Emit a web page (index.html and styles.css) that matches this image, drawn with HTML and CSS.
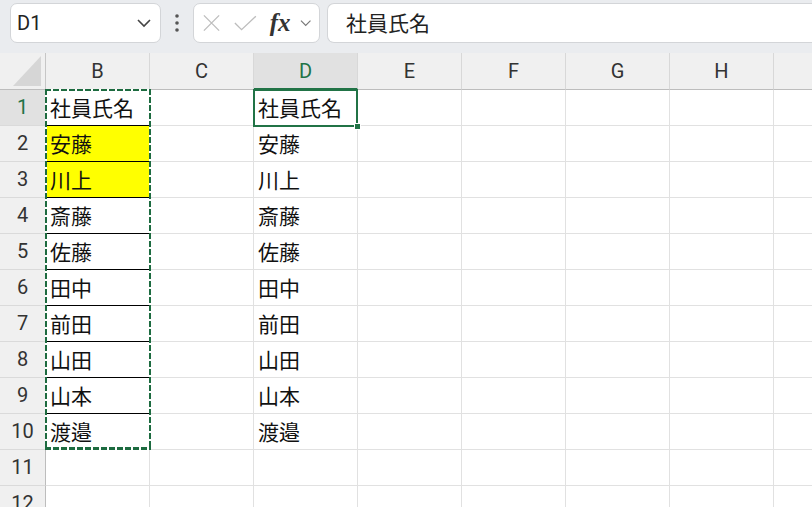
FILE: index.html
```html
<!DOCTYPE html>
<html lang="ja">
<head>
  <meta charset="UTF-8">
  <meta name="viewport" content="width=device-width, initial-scale=1.0">
  <title>Sheet</title>
  <link rel="stylesheet" href="styles.css">
</head>
<body>

<div class="toolbar">
  <div class="namebox">
    <span class="ref">D1</span>
    <svg class="chev" width="16" height="10" viewBox="0 0 16 10"><path d="M2 2 L8 8 L14 2" fill="none" stroke="#444" stroke-width="1.6"/></svg>
  </div>
  <div class="dots">
    <svg width="6" height="20" viewBox="0 0 6 20"><circle cx="3" cy="3" r="1.8" fill="#555"/><circle cx="3" cy="10" r="1.8" fill="#555"/><circle cx="3" cy="17" r="1.8" fill="#555"/></svg>
  </div>
  <div class="fxbox">
    <svg width="20" height="20" viewBox="0 0 20 20"><path d="M2 2 L18 18 M18 2 L2 18" stroke="#bdbdbd" stroke-width="1.4"/></svg>
    <svg width="26" height="20" viewBox="0 0 26 20"><path d="M2 10 L9 17 L24 3" fill="none" stroke="#bdbdbd" stroke-width="1.4"/></svg>
    <span class="fx">fx</span>
    <svg width="12" height="8" viewBox="0 0 12 8"><path d="M1 1.5 L6 6.5 L11 1.5" fill="none" stroke="#777" stroke-width="1.2"/></svg>
  </div>
  <div class="formula">社員氏名</div>
</div>

<div class="sheet" id="sheet">
  <div class="grid" id="grid">
    <div class="corner"><svg width="28" height="30" viewBox="0 0 28 30"><polygon points="28,0 28,30 0,30" fill="#d6d6d6"/></svg></div>
  </div>
  <div class="copy-range"></div>
  <div class="active-cell"><span class="handle"></span></div>
</div>

<script>
  const grid = document.getElementById('grid');
  const cols = ['B', 'C', 'D', 'E', 'F', 'G', 'H', ''];
  const names = ['社員氏名', '安藤', '川上', '斎藤', '佐藤', '田中', '前田', '山田', '山本', '渡邉'];

  cols.forEach(c => {
    grid.insertAdjacentHTML('beforeend', `<div class="colhead${c === 'D' ? ' selected' : ''}">${c}</div>`);
  });

  for (let r = 1; r <= 12; r++) {
    grid.insertAdjacentHTML('beforeend', `<div class="rowhead${r === 1 ? ' selected' : ''}">${r}</div>`);
    cols.forEach(c => {
      let cls = 'cell';
      let text = '';
      if ((c === 'B' || c === 'D') && r <= 10) text = names[r - 1];
      if (c === 'B' && r <= 10) cls += ' boxed';
      if (c === 'B' && (r === 2 || r === 3)) cls += ' yellow';
      grid.insertAdjacentHTML('beforeend', `<div class="${cls}">${text}</div>`);
    });
  }
</script>

</body>
</html>
```

FILE: styles.css
```css
* {
  box-sizing: border-box;
}

body {
  margin: 0;
  width: 812px;
  height: 507px;
  overflow: hidden;
  background: #fff;
  font-family: "Noto Sans CJK JP", "Noto Sans", sans-serif;
}

.toolbar {
  height: 53px;
  background: #eaecef;
  display: flex;
  align-items: flex-start;
  padding: 3px 0 0 10px;
}

.namebox,
.fxbox,
.formula {
  height: 40px;
  background: #fff;
  border: 1px solid #d3d5d8;
  border-radius: 7px;
}

.namebox {
  width: 151px;
  display: flex;
  align-items: center;
  justify-content: space-between;
  padding: 0 8px 0 6px;
}

.ref {
  font-family: Roboto, "Noto Sans", sans-serif;
  font-size: 20px;
  color: #222;
}

.dots {
  width: 32px;
  height: 40px;
  display: flex;
  align-items: center;
  justify-content: center;
}

.fxbox {
  width: 127px;
  display: flex;
  align-items: center;
  padding: 0 8px 0 8px;
  gap: 13px;
}

.fxbox svg:nth-child(2) {
  margin-left: -1px;
}

.fx {
  font-family: "Liberation Serif", "DejaVu Serif", serif;
  font-style: italic;
  font-weight: bold;
  font-size: 25px;
  color: #333;
  margin-left: -1px;
  margin-right: -4px;
}

.formula {
  flex: 1;
  margin-left: 7px;
  border-right: none;
  border-radius: 7px 0 0 7px;
  padding-left: 18px;
  font-size: 21px;
  line-height: 37px;
  color: #222;
}

.sheet {
  position: relative;
  height: 454px;
  overflow: hidden;
}

.grid {
  display: grid;
  grid-template-columns: 46px repeat(8, 104px);
  grid-auto-rows: 36px;
  grid-template-rows: 37px;
}

.corner {
  background: #f0f0f0;
  border-right: 1px solid #c6c6c6;
  border-bottom: 1px solid #bdbdbd;
  display: flex;
  align-items: flex-end;
  justify-content: flex-end;
  padding: 0 4px 3px 0;
}

.colhead {
  background: #f0f0f0;
  border-right: 1px solid #d8d8d8;
  border-bottom: 1px solid #bdbdbd;
  text-align: center;
  font-family: Roboto, "Noto Sans", sans-serif;
  font-size: 20px;
  line-height: 36px;
  color: #333;
}

.colhead.selected {
  background: #e1e1e1;
  color: #217346;
  border-bottom: 2px solid #217346;
}

.rowhead {
  background: #f0f0f0;
  border-right: 1px solid #bdbdbd;
  border-bottom: 1px solid #dadada;
  text-align: center;
  font-family: Roboto, "Noto Sans", sans-serif;
  font-size: 20px;
  line-height: 35px;
  color: #333;
}

.rowhead.selected {
  background: #e1e1e1;
  color: #217346;
}

.cell {
  border-right: 1px solid #e1e1e1;
  border-bottom: 1px solid #e1e1e1;
  padding-left: 4px;
  font-size: 21px;
  line-height: 34px;
  color: #111;
  white-space: nowrap;
}

.cell.boxed {
  border-bottom: 1px solid #000;
}

.cell.yellow {
  background: #ffff00;
}

.copy-range {
  position: absolute;
  left: 45px;
  top: 36px;
  width: 106px;
  height: 361px;
  background:
    repeating-linear-gradient(90deg, #1d6b40 0 6px, #fff 6px 8px) top left / 100% 2px no-repeat,
    repeating-linear-gradient(90deg, #1d6b40 0 6px, #fff 6px 8px) bottom left / 100% 3px no-repeat,
    repeating-linear-gradient(180deg, #1d6b40 0 6px, #fff 6px 8px) top left / 2px 100% no-repeat,
    repeating-linear-gradient(180deg, #1d6b40 0 6px, #fff 6px 8px) top right / 2px 100% no-repeat;
}

.active-cell {
  position: absolute;
  left: 253px;
  top: 36px;
  width: 105px;
  height: 38px;
  border: 2px solid #217346;
}

.handle {
  position: absolute;
  right: -5px;
  bottom: -5px;
  width: 7px;
  height: 7px;
  background: #217346;
  border: 1px solid #fff;
}
```
